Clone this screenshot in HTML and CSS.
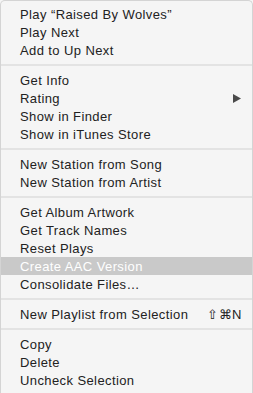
FILE: index.html
```html
<!DOCTYPE html>
<html>
<head>
    <title>Track Menu</title>
    <link rel="stylesheet" href="styles.css">
</head>
<body>
    <div class="menu">
        <div class="item">Play “Raised By Wolves”</div>
        <div class="item">Play Next</div>
        <div class="item">Add to Up Next</div>
        <div class="sep"></div>
        <div class="item">Get Info</div>
        <div class="item">Rating
            <svg class="arrow" width="8" height="9" viewBox="0 0 8 9"><path d="M0 0 L8 4.5 L0 9 Z" fill="#4a4a4a"/></svg>
        </div>
        <div class="item">Show in Finder</div>
        <div class="item">Show in iTunes Store</div>
        <div class="sep"></div>
        <div class="item">New Station from Song</div>
        <div class="item">New Station from Artist</div>
        <div class="sep"></div>
        <div class="item">Get Album Artwork</div>
        <div class="item">Get Track Names</div>
        <div class="item">Reset Plays</div>
        <div class="item active">Create AAC Version</div>
        <div class="item">Consolidate Files…</div>
        <div class="sep"></div>
        <div class="item">New Playlist from Selection <span class="keys">⇧⌘N</span></div>
        <div class="sep"></div>
        <div class="item">Copy</div>
        <div class="item">Delete</div>
        <div class="item">Uncheck Selection</div>
    </div>
</body>
</html>
```

FILE: styles.css
```css
html, body {
    margin: 0;
    height: 100%;
}

body {
    background-color: #f5f5f5;
    font-family: 'Liberation Sans', Arial, sans-serif;
    font-size: 13px;
    letter-spacing: 0.4px;
    color: #222222;
}

.menu {
    display: flex;
    flex-direction: column;
    box-sizing: border-box;
    height: 393px;
    padding: 4px 0 4px;
    border: 1px solid #d4d4d4;
    border-bottom: none;
    border-radius: 5px 5px 0 0;
    background-color: #f5f5f5;
}

.item {
    display: flex;
    align-items: center;
    justify-content: space-between;
    height: 18px;
    padding: 0 10px 0 19px;
    white-space: nowrap;
}

.item.active {
    background-color: #c9c9c9;
    color: #ffffff;
}

.arrow {
    margin-right: 1px;
}

.keys {
    letter-spacing: 0.5px;
}

.sep {
    height: 2px;
    margin: 5px 0;
    background-color: #e3e3e3;
}
```
